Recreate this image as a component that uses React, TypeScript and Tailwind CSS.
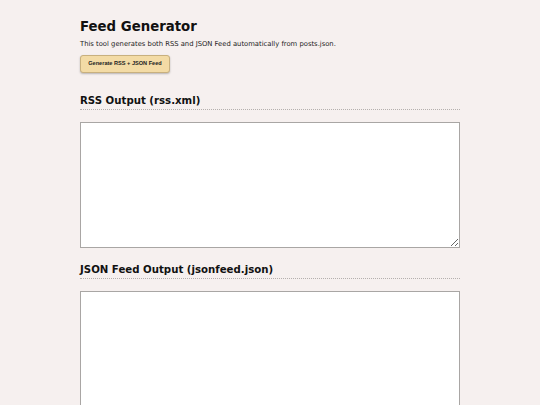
import React from "react";

export default function App() {
  return (
    <div className="min-h-[405px] w-full bg-[#f6f0ef] [font-family:'DejaVu_Sans',sans-serif]">
      <div className="mx-auto w-[380px] pt-[19px]">
        <h1 className="m-0 text-[13.3px] font-bold leading-[16px] text-[#111]">
          Feed Generator
        </h1>
        <p className="mt-[5px] text-[6.8px] leading-[9px] text-[#222]">
          This tool generates both RSS and JSON Feed automatically from posts.json.
        </p>
        <button className="mt-[6px] flex h-[18px] w-[90px] items-center justify-center rounded-[3px] border border-[#c8b07e] bg-[#f3dba5] text-[5.6px] font-bold leading-none text-[#222] shadow-[0_1px_2px_rgba(0,0,0,0.25)] [font-family:'Liberation_Sans',Arial,sans-serif]">
          Generate RSS + JSON Feed
        </button>
        <h2 className="mt-[21px] border-b border-dotted border-[#b5b0ae] pb-[2px] text-[10.2px] font-bold leading-[13px] text-[#111]">
          RSS Output (rss.xml)
        </h2>
        <textarea className="mt-[12px] block h-[126px] w-[380px] resize-y border border-[#a9a6a4] bg-white" />
        <h2 className="mt-[15px] border-b border-dotted border-[#b5b0ae] pb-[2px] text-[10.2px] font-bold leading-[13px] text-[#111]">
          JSON Feed Output (jsonfeed.json)
        </h2>
        <textarea className="mt-[12px] block h-[126px] w-[380px] resize-y border border-[#a9a6a4] bg-white" />
      </div>
    </div>
  );
}
